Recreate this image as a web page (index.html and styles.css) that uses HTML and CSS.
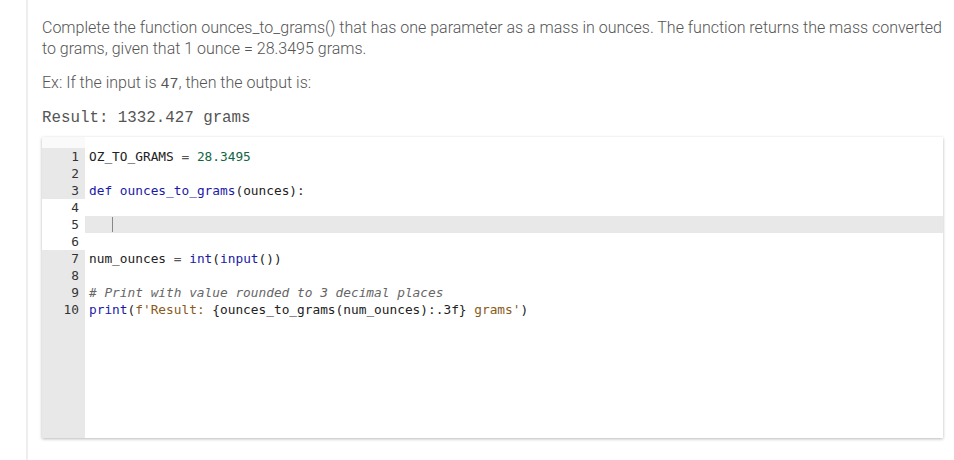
FILE: index.html
```html
<!DOCTYPE html>
<html>
<head>
<meta charset="utf-8">
<link rel="stylesheet" href="styles.css">
</head>
<body>
<div class="page">
  <p class="desc">Complete the function ounces_to_grams() that has one parameter as a mass in ounces. The function returns the mass converted to grams, given that 1 ounce = 28.3495 grams.</p>
  <p class="ex">Ex: If the input is <code class="inl">47</code>, then the output is:</p>
  <pre class="out">Result: 1332.427 grams</pre>
  <div class="editor">
    <div class="pad"><div class="num"></div><div class="code"></div></div>
    <div class="line"><div class="num">1</div><div class="code">OZ_TO_GRAMS <span class="op">=</span> <span class="n">28.3495</span></div></div>
    <div class="line"><div class="num">2</div><div class="code"></div></div>
    <div class="line"><div class="num">3</div><div class="code"><span class="k">def</span> <span class="f">ounces_to_grams</span>(ounces):</div></div>
    <div class="line blank"><div class="num">4</div><div class="code"></div></div>
    <div class="line blank active"><div class="num">5</div><div class="code">   <span class="cursor"></span></div></div>
    <div class="line blank"><div class="num">6</div><div class="code"></div></div>
    <div class="line"><div class="num">7</div><div class="code">num_ounces <span class="op">=</span> <span class="k">int</span>(<span class="k">input</span>())</div></div>
    <div class="line"><div class="num">8</div><div class="code"></div></div>
    <div class="line"><div class="num">9</div><div class="code"><span class="c"># Print with value rounded to 3 decimal places</span></div></div>
    <div class="line"><div class="num">10</div><div class="code"><span class="k">print</span>(<span class="s">f'Result: </span>{ounces_to_grams(num_ounces):.3f}<span class="s"> grams'</span>)</div></div>
    <div class="filler"><div class="num"></div><div class="code"></div></div>
  </div>
</div>
</body>
</html>
```
FILE: styles.css
```css
html, body {
  margin: 0;
  padding: 0;
  background: #fff;
}
.page {
  margin-left: 26px;
  border-left: 2px solid #eeeeee;
  padding: 17px 11px 0 14px;
  min-height: 443px;
  font-family: Roboto, "Noto Sans", sans-serif;
  font-weight: 300;
  color: #555;
}
.desc {
  margin: 0 -8px 0 0;
  font-size: 16px;
  line-height: 21px;
}
.ex {
  margin: 13px 0 0;
  font-size: 16px;
  line-height: 21px;
}
.inl {
  font-family: "Liberation Mono", monospace;
  font-size: 15px;
}
.out {
  margin: 13px 0 0;
  font-family: "Liberation Mono", monospace;
  font-size: 15.8px;
  line-height: 21px;
  color: #555;
}
.editor {
  margin-top: 8px;
  height: 301px;
  display: flex;
  flex-direction: column;
  background: #fff;
  box-shadow: 0 1px 3px rgba(0,0,0,0.28);
  font-family: "DejaVu Sans Mono", monospace;
  font-size: 12.8px;
  font-weight: 400;
  color: #222;
}
.pad, .line, .filler {
  display: flex;
}
.pad { height: 11px; }
.line { height: 17px; line-height: 17px; }
.filler { flex: 1; }
.num {
  width: 37px;
  padding-right: 6px;
  flex: none;
  text-align: right;
  background: #e8e8e8;
  color: #333;
}
.pad .num { background: #fafafa; }
.code {
  flex: 1;
  padding-left: 4px;
  white-space: pre;
}
.blank .num { background: #fff; }
.active .code { background: #e8e8e8; }
.cursor {
  display: inline-block;
  width: 1px;
  height: 15px;
  background: #888;
  vertical-align: -3px;
}
.k { color: #1a1aa6; }
.f { color: #1a1aa6; }
.n { color: #116644; }
.s { color: #8a5a1a; }
.op { color: #555; }
.c { color: #666; font-style: italic; }
```
